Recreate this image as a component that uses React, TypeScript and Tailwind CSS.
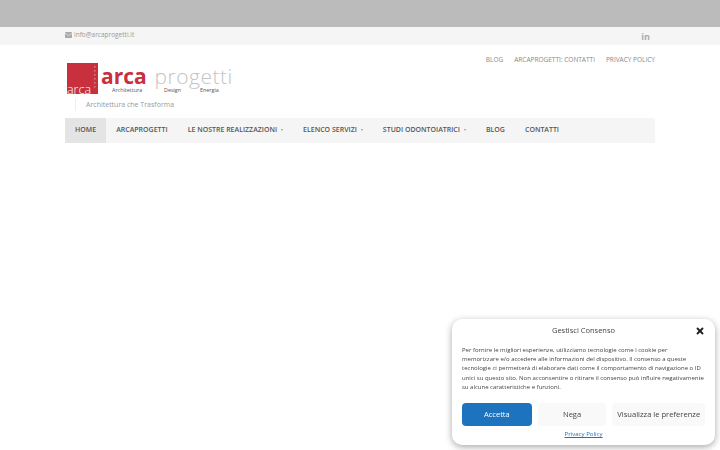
import { X } from "lucide-react";

function Caret() {
  return <span className="ml-[4px] mb-[2px] inline-block h-0 w-0 border-x-[1.5px] border-t-[2px] border-x-transparent border-t-[#999]" />;
}

function NavItem({ label, active, caret }: { label: string; active?: boolean; caret?: boolean }) {
  return (
    <a className={`flex h-full items-center px-[10px] text-[7px] font-semibold ${active ? "bg-[#e4e4e4]" : ""}`}>
      {label}
      {caret && <Caret />}
    </a>
  );
}

function Logo() {
  return (
    <svg width="170" height="36" viewBox="0 0 170 36" className="block">
      <rect x="1" y="1" width="31" height="31" fill="#c9303e" />
      <g fill="#e57b84">
        <rect x="28" y="4" width="1.5" height="1.5" />
        <rect x="28" y="8" width="1.5" height="1.5" />
        <rect x="28" y="12" width="1.5" height="1.5" />
        <rect x="28" y="16" width="1.5" height="1.5" />
        <rect x="28" y="20" width="1.5" height="1.5" />
        <rect x="28" y="24" width="1.5" height="1.5" />
      </g>
      <text x="1" y="32" fontFamily="'Open Sans',sans-serif" fontSize="12.5" fontWeight="300" fill="#fff">arca</text>
      <text x="35" y="22" fontFamily="'Open Sans',sans-serif" fontSize="21" fontWeight="700" fill="#c9303e">arca</text>
      <text x="88.5" y="22" fontFamily="'Open Sans',sans-serif" fontSize="21" fontWeight="300" letterSpacing="0.5" fill="#c4c4c4">progetti</text>
      <text x="46" y="30" fontFamily="'Open Sans',sans-serif" fontSize="5.4" fill="#555">Architettura</text>
      <text x="98" y="30" fontFamily="'Open Sans',sans-serif" fontSize="5.4" fill="#555">Design</text>
      <text x="134" y="30" fontFamily="'Open Sans',sans-serif" fontSize="5.4" fill="#555">Energia</text>
    </svg>
  );
}

function ConsentModal() {
  return (
    <div className="fixed right-[5px] bottom-[5px] w-[263px] rounded-[10px] bg-white px-[10px] pb-[5px] shadow-[0_2px_7px_rgba(0,0,0,0.35)]">
      <div className="relative flex h-[24px] items-center justify-center">
        <span className="text-[7.5px] text-[#444]">Gestisci Consenso</span>
        <X size={10} strokeWidth={4.5} className="absolute right-0 top-[7px] text-[#222]" />
      </div>
      <p className="mt-[3px] whitespace-nowrap text-[6px] leading-[9.2px] text-[#444]">
        Per fornire le migliori esperienze, utilizziamo tecnologie come i cookie per
        <br />
        memorizzare e/o accedere alle informazioni del dispositivo. Il consenso a queste
        <br />
        tecnologie ci permetterà di elaborare dati come il comportamento di navigazione o ID
        <br />
        unici su questo sito. Non acconsentire o ritirare il consenso può influire negativamente
        <br />
        su alcune caratteristiche e funzioni.
      </p>
      <div className="mt-[11px] flex gap-[6px]">
        <button className="h-[23px] w-[70px] rounded-[4px] bg-[#1e73be] text-[7.5px] text-white">Accetta</button>
        <button className="h-[23px] w-[69px] rounded-[4px] bg-[#f9f9f9] text-[7.5px] text-[#444]">Nega</button>
        <button className="h-[23px] w-[93px] rounded-[4px] bg-[#f9f9f9] text-[7.6px] text-[#444]">Visualizza le preferenze</button>
      </div>
      <div className="mt-[2px] text-center text-[6.1px] leading-[12px] text-[#1e73be] underline">Privacy Policy</div>
    </div>
  );
}

export default function App() {
  return (
    <div className="h-[450px] w-[720px] overflow-hidden bg-white font-['Open_Sans',sans-serif]">
      <div className="h-[27px] bg-[#bbbbbb]" />

      <div className="h-[18px] bg-[#f5f5f5]">
        <div className="mx-[65px] flex h-full items-start justify-between">
          <div className="mt-[3px] flex items-center gap-[2px] text-[6.5px] text-[#999]">
            <svg width="7" height="6" viewBox="0 0 7 6" className="block">
              <rect width="7" height="6" rx="0.8" fill="#aaa" />
              <path d="M0 1.2 L3.5 3.6 L7 1.2" fill="none" stroke="#f5f5f5" strokeWidth="0.6" />
            </svg>
            info@arcaprogetti.it
          </div>
          <span className="mt-[5px] mr-[5px] text-[9px] font-bold leading-[10px] text-[#aaa]">in</span>
        </div>
      </div>

      <div className="mx-[65px]">
        <div className="flex items-start justify-between">
          <div className="pt-[17px] ml-[1px]">
            <Logo />
          </div>
          <div className="flex gap-[11px] pt-[10px] text-[6.5px] leading-[10px] text-[#888]">
            <span>BLOG</span>
            <span>ARCAPROGETTI: CONTATTI</span>
            <span>PRIVACY POLICY</span>
          </div>
        </div>
        <div className="ml-[10px] h-[13px] border-l border-[#eee] pl-[10px] text-[7px] leading-[13px] text-[#999]">
          Architettura che Trasforma
        </div>
        <nav className="mt-[7px] flex h-[25px] items-center bg-[#f5f5f5] text-[#555]">
          <NavItem label="HOME" active />
          <NavItem label="ARCAPROGETTI" />
          <NavItem label="LE NOSTRE REALIZZAZIONI" caret />
          <NavItem label="ELENCO SERVIZI" caret />
          <NavItem label="STUDI ODONTOIATRICI" caret />
          <NavItem label="BLOG" />
          <NavItem label="CONTATTI" />
        </nav>
      </div>

      <ConsentModal />
    </div>
  );
}
